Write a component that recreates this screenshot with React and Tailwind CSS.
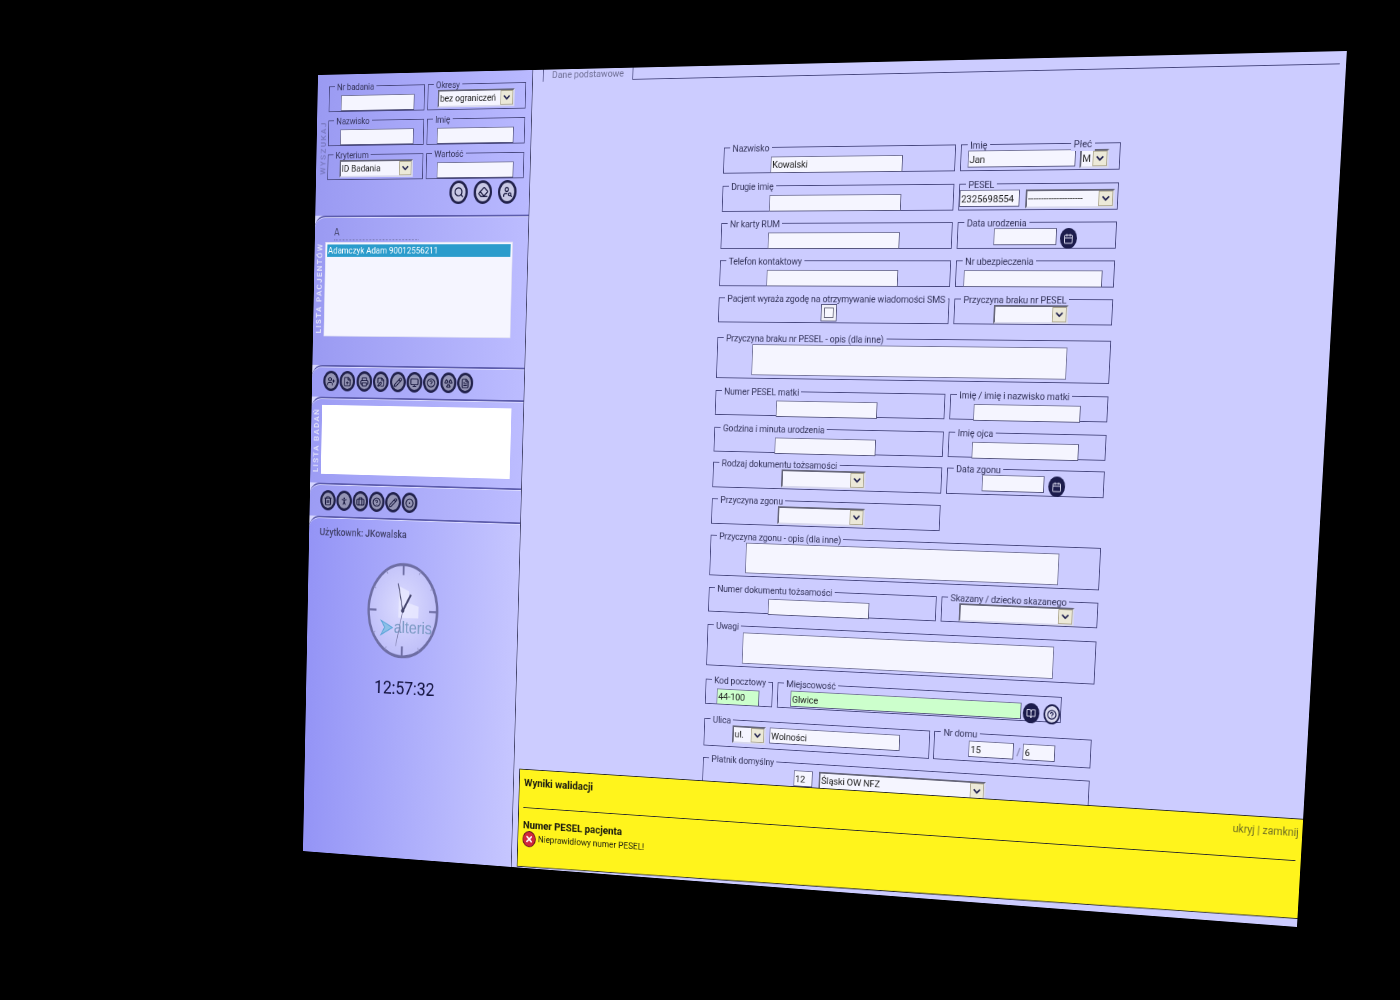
import {
  Search, Eraser, UserSearch, UserPlus, FilePlus, Printer, FileEdit, Pencil, Monitor, HelpCircle,
  Radiation, FileText, Trash2, PersonStanding, Briefcase, CircleDot, Calendar, BookOpen, ChevronDown, X,
} from 'lucide-react';

const FLAT_W = 1280;
const FLAT_H = 960;

// rzut kartki na czworokat ze zrzutu
function quadMatrix(w, h, [x0, y0], [x1, y1], [x2, y2], [x3, y3]) {
  const dx1 = x1 - x2, dx2 = x3 - x2, sx = x0 - x1 + x2 - x3;
  const dy1 = y1 - y2, dy2 = y3 - y2, sy = y0 - y1 + y2 - y3;
  const det = dx1 * dy2 - dx2 * dy1;
  const g = (sx * dy2 - dx2 * sy) / det;
  const k = (dx1 * sy - sx * dy1) / det;
  const a = x1 - x0 + g * x1, b = x3 - x0 + k * x3;
  const d = y1 - y0 + g * y1, e = y3 - y0 + k * y3;
  return `matrix3d(${a / w},${d / w},0,${g / w},${b / h},${e / h},0,${k / h},0,0,1,0,${x0},${y0},0,1)`;
}

const Box = ({ label, className = '', children }) => (
  <fieldset className={`min-w-0 border border-[#47477e] ${className}`}>
    <legend className="ml-[7px] translate-y-[2px] whitespace-nowrap px-[3px] text-[11px] leading-[14px] tracking-[-0.15px] text-[#34345a]">{label}</legend>
    {children}
  </fieldset>
);

const Input = ({ value = '', className = '', green }) => (
  <input
    readOnly
    value={value}
    className={`h-[19px] border border-[#77779c] border-b-[#55557e] border-r-[#55557e] px-[1px] text-[11.5px] tracking-[-0.15px] text-[#222] outline-none ${green ? 'bg-[#ccffcc]' : 'bg-[#f5f5ff]'} ${className}`}
  />
);

const Select = ({ value = '', className = '' }) => (
  <div className={`flex h-[21px] items-stretch border-2 border-[#66667a] border-b-[#d8d8ee] border-r-[#d8d8ee] bg-[#f5f5ff] ${className}`}>
    <span className="min-w-0 flex-1 overflow-hidden whitespace-nowrap pl-[1px] text-[11.5px] leading-[16px] tracking-[-0.1px] text-[#222]">{value}</span>
    <span className="flex w-[17px] items-center justify-center border border-[#b0aa90] bg-[#ece9d8]">
      <ChevronDown size={13} strokeWidth={3.5} className="text-[#222250]" />
    </span>
  </div>
);

const Round = ({ icon: Icon, big, light }) => (
  <span className={`flex shrink-0 items-center justify-center rounded-[50%] border-[3px] border-[#22224c] ${big ? 'h-[28px] w-[25px]' : 'h-[25px] w-[22px]'} ${light ? 'bg-[#c8c8e4]' : 'bg-[#9494b4]'}`}>
    <Icon size={big ? 14 : 12} strokeWidth={2.4} className="text-[#16163c]" />
  </span>
);

const DarkIcon = ({ icon: Icon }) => (
  <span className="flex h-[23px] w-[20px] shrink-0 items-center justify-center rounded-[50%] bg-[#1c1c4c]">
    <Icon size={12} strokeWidth={2} className="text-[#dcdcf0]" />
  </span>
);

const Rail = ({ text, className = '' }) => (
  <div className={`flex w-[15px] shrink-0 items-center justify-center ${className}`}>
    <span className="rotate-180 whitespace-nowrap text-[10px] font-bold uppercase tracking-[1.5px] [writing-mode:vertical-rl]">{text}</span>
  </div>
);

const Section = ({ className = '', children }) => (
  <div className={`rounded-tl-[14px] border-t-2 border-[#5c5cac] shadow-[inset_0_1px_0_#dcdcff] ${className}`}>
    {children}
  </div>
);

const Clock = () => (
  <svg viewBox="0 0 100 115" preserveAspectRatio="none" className="ml-[85px] mt-[27px] h-[119px] w-[100px]">
    <defs>
      <radialGradient id="face" cx="50%" cy="45%" r="60%">
        <stop offset="0%" stopColor="#dcdcff" />
        <stop offset="100%" stopColor="#bcbcf8" />
      </radialGradient>
    </defs>
    <ellipse cx="50" cy="57.5" rx="48" ry="55" fill="url(#face)" stroke="#6e6ea4" strokeWidth="3.4" />
    <path d="M44 28 L58 34 L58 48 L72 52 L72 66 L44 66 Z" fill="#eaeaff" opacity="0.8" />
    <path d="M50 3 V15 M50 100 V112 M2 57.5 H13 M87 57.5 H98" stroke="#6e6ea4" strokeWidth="2.6" />
    <path d="M74 10 L72 14 M91 30 L88 32 M91 85 L88 83 M74 105 L72 101 M26 105 L28 101 M9 85 L12 83 M9 30 L12 32 M26 10 L28 14" stroke="#9090c0" strokeWidth="1" />
    <path d="M20 70 L36 78 L20 87 L25 78 Z" fill="#8cc0e8" stroke="#5aa4d8" strokeWidth="1.2" />
    <text x="38" y="84" fontSize="20" fontFamily="Liberation Sans, sans-serif" fill="#7c9ac4">alteris</text>
    <path d="M50 57.5 L61 38" stroke="#46466e" strokeWidth="2.6" />
    <path d="M50 57.5 L43 25" stroke="#46466e" strokeWidth="1.2" />
    <path d="M50 57.5 L41 100" stroke="#6c6c98" strokeWidth="0.8" />
    <circle cx="50" cy="57.5" r="2.4" fill="#46466e" />
  </svg>
);

const LeftPanel = () => (
  <div className="flex w-[295px] shrink-0 flex-col border-r border-[#44446a] bg-[#d6d6ff] text-[#38385c]">
    <div className="flex h-[170px] bg-linear-to-r from-[#9a9af2] to-[#b9b9ff]">
      <Rail text="Wyszukaj" className="h-[128px] pl-[3px] pt-[48px] text-[#7c7cc4]" />
      <div className="pl-[1px] pt-[7px]">
        <div className="grid grid-cols-[133px_133px] gap-x-[4px] gap-y-[3px]">
          <Box label="Nr badania" className="h-[38px]"><Input className="ml-[16px] w-[102px]" /></Box>
          <Box label="Okresy" className="h-[38px]"><Select value="bez ograniczeń" className="ml-[13px] w-[104px]" /></Box>
          <Box label="Nazwisko" className="h-[38px]"><Input className="ml-[16px] w-[102px]" /></Box>
          <Box label="Imię" className="h-[38px]"><Input className="ml-[13px] w-[104px]" /></Box>
          <Box label="Kryterium" className="h-[38px]"><Select value="ID Badania" className="ml-[16px] w-[102px]" /></Box>
          <Box label="Wartość" className="h-[38px]"><Input className="ml-[14px] w-[104px]" /></Box>
        </div>
        <div className="ml-[170px] mt-[2px] flex gap-[8px]">
          <Round icon={Search} big light />
          <Round icon={Eraser} big light />
          <Round icon={UserSearch} big light />
        </div>
      </div>
    </div>

    <Section className="flex h-[182px] bg-linear-to-r from-[#9a9af2] to-[#bcbcff]">
      <Rail text="Lista pacjentów" className="mt-[30px] h-[112px] text-[#e0e0fa]" />
      <div className="pt-[10px]">
        <div className="ml-[12px] w-[118px] border-b border-dotted border-[#6a6a9a] text-[12px] leading-[17px] text-[#44446a]">A</div>
        <div className="mt-[2px] h-[115px] w-[259px] border border-[#dcdcf4] bg-[#f5f5ff] p-[2px]">
          <div className="bg-[#2b9ccc] px-[1px] text-[11px] leading-[15px] text-white">Adamczyk Adam 90012556211</div>
        </div>
      </div>
    </Section>

    <Section className="flex h-[39px] items-center gap-[1.4px] bg-linear-to-r from-[#9c9cf4] to-[#bcbcff] pb-[2px] pl-[16px]">
      {[UserPlus, FilePlus, Printer, FileEdit, Pencil, Monitor, HelpCircle, Radiation, FileText].map((icon, i) => (
        <Round key={i} icon={icon} />
      ))}
    </Section>

    <Section className="flex h-[106px] bg-linear-to-r from-[#9c9cf4] to-[#bcbcff]">
      <Rail text="Lista badań" className="mt-[8px] h-[88px] w-[14px] text-[#e0e0fa]" />
      <div className="mt-[8px] h-[85px] w-[263px] bg-white" />
    </Section>

    <Section className="flex h-[41px] items-center gap-[1px] bg-linear-to-r from-[#9c9cf4] to-[#bcbcff] pl-[15px]">
      {[Trash2, PersonStanding, Briefcase, HelpCircle, Pencil, CircleDot].map((icon, i) => (
        <Round key={i} icon={icon} />
      ))}
    </Section>

    <Section className="flex-1 bg-linear-to-r from-[#9494f6] to-[#c6c6ff] pl-[15px] pt-[11px]">
      <div className="text-[12px] font-medium leading-[14px] text-[#44446e]">Użytkownk: JKowalska</div>
      <div className="-ml-[15px]">
        <Clock />
        <div className="mt-[24px] pr-[15px] text-center text-[22px] leading-[26px] text-[#10103c]">12:57:32</div>
      </div>
    </Section>
  </div>
);

const FormFields = () => (
  <div className="ml-[252px] flex w-[483px] flex-col pt-[73px]">
    <div className="flex gap-[6px]">
      <Box label="Nazwisko" className="h-[37px] w-[288px]"><Input value="Kowalski" className="ml-[59px] w-[164px]" /></Box>
      <Box label="Imię" className="relative h-[37px] w-[189px]">
        <span className="absolute -top-[12px] left-[130px] bg-[#ccccff] px-[3px] text-[11px] leading-[14px] text-[#34345a]">Płeć</span>
        <div className="flex gap-[5px] pl-[8px]">
          <Input value="Jan" className="w-[128px]" />
          <Select value="M" className="w-[34px]" />
        </div>
      </Box>
    </div>
    <div className="mt-[7px] flex gap-[6px]">
      <Box label="Drugie imię" className="h-[37px] w-[288px]"><Input className="ml-[59px] w-[164px]" /></Box>
      <Box label="PESEL" className="h-[37px] w-[189px]">
        <div className="flex gap-[7px]">
          <Input value="2325698554" className="w-[72px]" />
          <Select value="---------------------" className="w-[105px]" />
        </div>
      </Box>
    </div>
    <div className="mt-[6px] flex gap-[6px]">
      <Box label="Nr karty RUM" className="h-[37px] w-[288px]"><Input className="ml-[59px] w-[164px]" /></Box>
      <Box label="Data urodzenia" className="h-[37px] w-[189px]">
        <div className="flex gap-[4px] pl-[43px]">
          <Input className="w-[75px]" />
          <DarkIcon icon={Calendar} />
        </div>
      </Box>
    </div>
    <div className="mt-[6px] flex gap-[6px]">
      <Box label="Telefon kontaktowy" className="h-[37px] w-[288px]"><Input className="ml-[59px] w-[164px]" /></Box>
      <Box label="Nr ubezpieczenia" className="h-[37px] w-[189px]"><Input className="ml-[9px] w-[165px]" /></Box>
    </div>
    <div className="mt-[6px] flex gap-[6px]">
      <Box label="Pacjent wyraża zgodę na otrzymywanie wiadomości SMS" className="h-[36px] w-[288px]">
        <div className="ml-[129px] flex h-[20px] w-[20px] items-center justify-center border border-[#55557e] bg-[#f0f0f8]">
          <span className="h-[12px] w-[12px] border border-[#66667a] bg-[#f8f8ff]" />
        </div>
      </Box>
      <Box label="Przyczyna braku nr PESEL" className="h-[36px] w-[189px]"><Select className="ml-[47px] w-[89px]" /></Box>
    </div>
    <Box label="Przyczyna braku nr PESEL - opis (dla inne)" className="mt-[10px] h-[55px] w-[483px]">
      <div className="ml-[44px] mt-[1px] h-[36px] w-[387px] border border-[#77779c] bg-[#f5f5ff]" />
    </Box>
    <div className="mt-[7px] flex gap-[6px]">
      <Box label="Numer PESEL matki" className="h-[36px] w-[288px]"><Input className="ml-[77px] w-[127px]" /></Box>
      <Box label="Imię / imię i nazwisko matki" className="h-[36px] w-[189px]"><Input className="ml-[28px] w-[128px]" /></Box>
    </div>
    <div className="mt-[7px] flex gap-[6px]">
      <Box label="Godzina i minuta urodzenia" className="h-[36px] w-[288px]"><Input className="ml-[77px] w-[127px]" /></Box>
      <Box label="Imię ojca" className="h-[36px] w-[189px]"><Input className="ml-[28px] w-[128px]" /></Box>
    </div>
    <div className="mt-[5px] flex gap-[6px]">
      <Box label="Rodzaj dokumentu tożsamości" className="h-[37px] w-[288px]"><Select className="ml-[87px] w-[106px]" /></Box>
      <Box label="Data zgonu" className="h-[37px] w-[189px]">
        <div className="flex gap-[5px] pl-[42px]">
          <Input className="w-[75px]" />
          <DarkIcon icon={Calendar} />
        </div>
      </Box>
    </div>
    <Box label="Przyczyna zgonu" className="mt-[6px] h-[37px] w-[288px]"><Select className="ml-[84px] w-[110px]" /></Box>
    <Box label="Przyczyna zgonu - opis (dla inne)" className="mt-[6px] h-[55px] w-[483px]">
      <div className="ml-[45px] mt-[1px] h-[36px] w-[388px] border border-[#77779c] bg-[#f5f5ff]" />
    </Box>
    <div className="mt-[7px] flex gap-[6px]">
      <Box label="Numer dokumentu tożsamości" className="h-[36px] w-[288px]"><Input className="ml-[76px] w-[128px]" /></Box>
      <Box label="Skazany / dziecko skazanego" className="h-[36px] w-[189px]"><Select className="ml-[21px] w-[139px]" /></Box>
    </div>
    <Box label="Uwagi" className="mt-[8px] h-[56px] w-[483px]">
      <div className="ml-[45px] mt-[1px] h-[37px] w-[387px] border border-[#77779c] bg-[#f5f5ff]" />
    </Box>
    <div className="mt-[9px] flex gap-[6px]">
      <Box label="Kod pocztowy" className="h-[37px] w-[87px]"><Input value="44-100" green className="ml-[14px] w-[55px]" /></Box>
      <Box label="Miejscowość" className="h-[37px] w-[352px]">
        <div className="flex gap-[2px] pl-[16px] pt-[2px]">
          <Input value="Glwice" green className="w-[287px]" />
          <DarkIcon icon={BookOpen} />
          <span className="ml-[3px] flex h-[23px] w-[20px] shrink-0 items-center justify-center rounded-[50%] border-2 border-[#1c1c4c] bg-[#dcdcf0]">
            <HelpCircle size={12} strokeWidth={2.5} className="text-[#1c1c4c]" />
          </span>
        </div>
      </Box>
    </div>
    <div className="mt-[10px] flex gap-[5px]">
      <Box label="Ulica" className="h-[40px] w-[288px]">
        <div className="flex gap-[5px] pl-[36px]">
          <Select value="ul." className="w-[43px]" />
          <Input value="Wolności" className="w-[165px]" />
        </div>
      </Box>
      <Box label="Nr domu" className="h-[40px] w-[191px]">
        <div className="flex items-center pl-[42px] pt-[2px]">
          <Input value="15" className="w-[55px]" />
          <span className="w-[11px] text-center text-[12px] text-[#6a6a90]">/</span>
          <Input value="6" className="w-[39px]" />
        </div>
      </Box>
    </div>
    <Box label="Płatnik domyślny" className="mt-[7px] h-[60px] w-[483px]">
      <div className="flex gap-[8px] pl-[117px] pt-[2px]">
        <Input value="12" className="w-[24px]" />
        <Select value="Śląski OW NFZ" className="h-[22px] w-[208px]" />
      </div>
    </Box>
  </div>
);

const ValidationBar = () => (
  <div className="ml-[7px] h-[121px] shrink-0 bg-[#2a2a2a] [clip-path:polygon(0_0,100%_0,100%_113px,0_121px)]">
    <div className="h-full bg-[#fff41c] pl-[7px] text-[#1c1c10] [clip-path:polygon(1px_1px,100%_1px,100%_112px,1px_120px)]">
      <div className="mr-[6px] flex h-[48px] items-start justify-between border-b border-[#2a2a2a] pt-[10px]">
        <span className="text-[13px] font-bold leading-[14px]">Wyniki walidacji</span>
        <span className="-mr-[2px] -mt-[1px] text-[12px] leading-[14px] text-[#6e6e24]">ukryj | zamknij</span>
      </div>
      <div className="pt-[14px] text-[13px] font-bold leading-[14px]">Numer PESEL pacjenta</div>
      <div className="flex items-center gap-[3px]">
        <span className="flex h-[20px] w-[18px] items-center justify-center rounded-[50%] border border-[#5a1020] bg-[#d0283c]">
          <X size={12} strokeWidth={4} className="text-white" />
        </span>
        <span className="text-[11px] leading-[14px]">Nieprawidłowy numer PESEL!</span>
      </div>
    </div>
  </div>
);

const App = () => {
  const matrix = quadMatrix(FLAT_W, FLAT_H, [318, 75], [1347, 51], [1297, 927], [303, 851]);

  return (
    <div className="h-screen w-screen overflow-hidden bg-black">
      <div
        style={{ transform: matrix }}
        className="flex h-[960px] w-[1280px] origin-top-left bg-[#ccccff] font-['Roboto',sans-serif] blur-[0.35px]"
      >
        <LeftPanel />
        <div className="flex min-w-0 flex-1 flex-col">
          <div className="flex h-[14px] shrink-0 pl-[13px] pr-[7px]">
            <div className="w-[119px] border-l border-r border-[#47477e] text-center text-[11.5px] leading-[13px] text-[#6c6c92]">Dane podstawowe</div>
            <div className="flex-1 border-b border-[#47477e]" />
          </div>
          <div className="min-h-0 flex-1 overflow-hidden">
            <FormFields />
          </div>
          <ValidationBar />
          <div className="h-[1px] shrink-0" />
        </div>
      </div>
    </div>
  );
};

export default App;
